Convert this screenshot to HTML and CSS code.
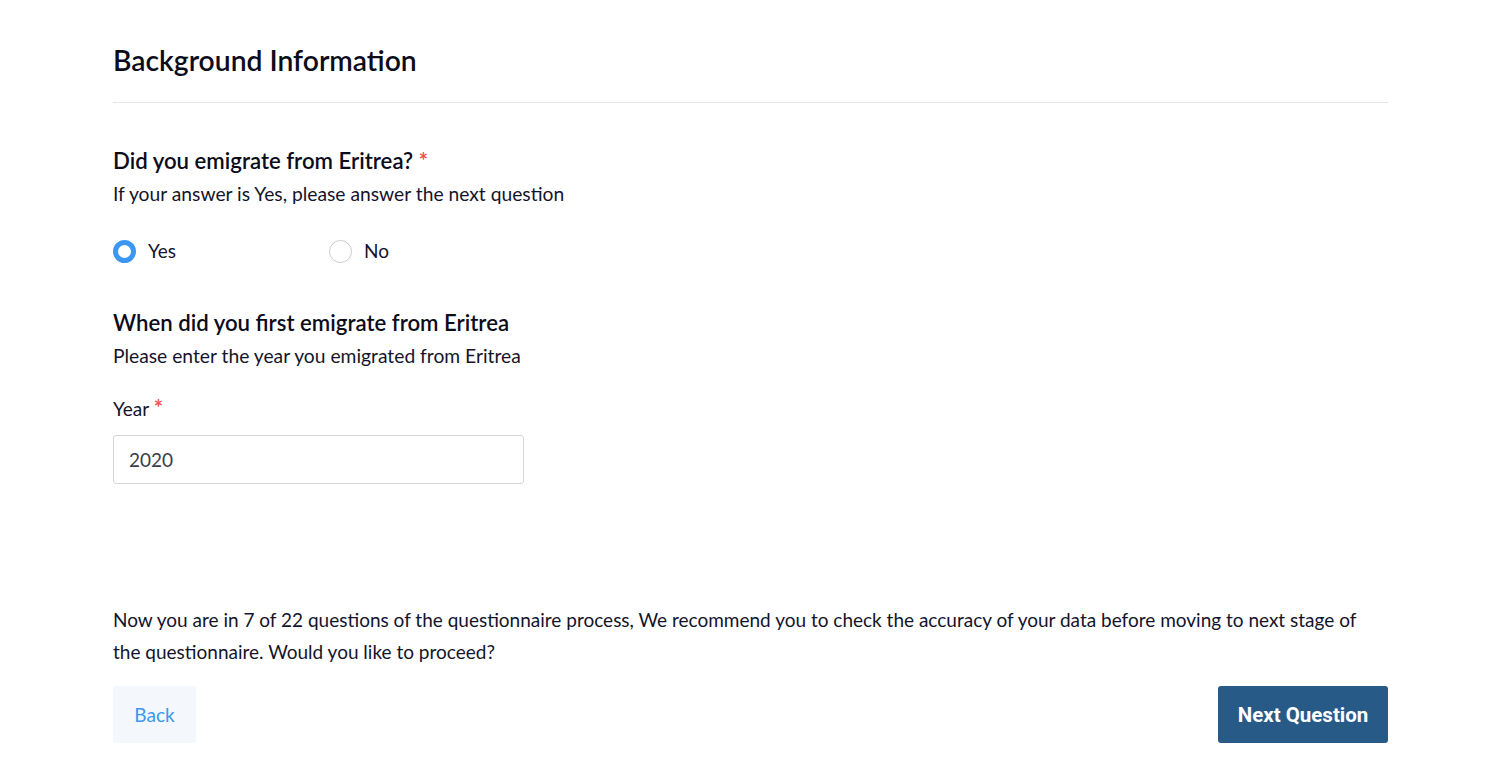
FILE: index.html
```html
<!DOCTYPE html>
<html lang="en">
<head>
<meta charset="utf-8">
<title>Background Information</title>
<link rel="stylesheet" href="styles.css">
</head>
<body>
<main class="page">
  <h1 class="title">Background Information</h1>
  <hr class="divider">

  <section class="question">
    <h2 class="q-title">Did you emigrate from Eritrea? <span class="req">*</span></h2>
    <p class="q-help">If your answer is Yes, please answer the next question</p>
    <div class="radios">
      <label class="radio"><span class="dot checked"></span>Yes</label>
      <label class="radio"><span class="dot"></span>No</label>
    </div>
  </section>

  <section class="question q2">
    <h2 class="q-title">When did you first emigrate from Eritrea</h2>
    <p class="q-help">Please enter the year you emigrated from Eritrea</p>
    <label class="field-label">Year <span class="req">*</span></label>
    <div class="input">2020</div>
  </section>

  <p class="notice">Now you are in 7 of 22 questions of the questionnaire process, We recommend you to check the accuracy of your data before moving to next stage of the questionnaire. Would you like to proceed?</p>

  <div class="actions">
    <button class="btn-back">Back</button>
    <button class="btn-next">Next Question</button>
  </div>
</main>
</body>
</html>
```

FILE: styles.css
```css
* { box-sizing: border-box; }
html, body { margin: 0; padding: 0; background: #fff; }
body {
  font-family: "Lato", "Open Sans", sans-serif;
  color: #14142b;
}
.page {
  width: 1275px;
  margin-left: 113px;
  padding-top: 40px;
}
.title {
  margin: 0;
  font-size: 28.3px;
  font-weight: 600;
  line-height: 40px;
  color: #0c0c1a;
}
.divider {
  margin: 22px 0 0;
  border: 0;
  border-top: 1px solid #e5e7eb;
}
.question { margin-top: 43px; }
.q2 { margin-top: 45px; }
.q-title {
  margin: 0;
  font-size: 22.2px;
  font-weight: 600;
  line-height: 30px;
  color: #0c0c1a;
}
.req { color: #f05252; font-size: 22px; line-height: 0; vertical-align: 0; font-weight: 700; }
.q-help {
  margin: 5px 0 0;
  font-size: 19.25px;
  line-height: 26px;
}
.radios {
  display: flex;
  margin-top: 32px;
}
.radio {
  display: flex;
  align-items: center;
  gap: 12px;
  width: 216px;
  font-size: 19px;
  line-height: 24px;
}
.dot {
  width: 23px;
  height: 23px;
  border-radius: 50%;
  border: 1.5px solid #c8cbd0;
  background: #fff;
}
.dot.checked { border: 5px solid #3b97f0; }
.field-label {
  display: block;
  margin-top: 27px;
  font-size: 19px;
  line-height: 26px;
}
.input {
  margin-top: 13px;
  width: 411px;
  height: 49px;
  border: 1px solid #d4d6da;
  border-radius: 3px;
  padding: 0 15px;
  display: flex;
  align-items: center;
  font-size: 19px;
  color: #3b3b4a;
}
.notice {
  margin: 120px 0 0;
  font-size: 19px;
  line-height: 32px;
}
.actions {
  display: flex;
  justify-content: space-between;
  margin-top: 18px;
}
.btn-back {
  width: 83px;
  height: 57px;
  border: 0;
  border-radius: 3px;
  background: #f4f8fd;
  color: #3b97f0;
  font-family: inherit;
  font-size: 19px;
  cursor: pointer;
}
.btn-next {
  width: 170px;
  height: 57px;
  border: 0;
  border-radius: 3px;
  background: #285a87;
  color: #fff;
  font-family: "Roboto", "Liberation Sans", sans-serif;
  font-weight: 700;
  font-size: 20.5px;
  cursor: pointer;
}
```
